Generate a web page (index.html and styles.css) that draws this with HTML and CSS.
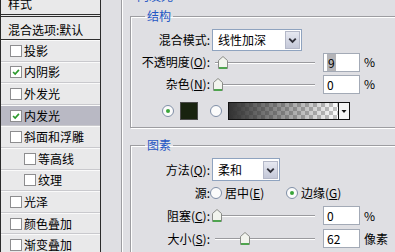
FILE: index.html
```html
<!DOCTYPE html>
<html lang="zh-CN">
<head>
  <meta charset="UTF-8">
  <title>图层样式 - 内发光</title>
  <link rel="stylesheet" href="styles.css">
</head>
<body>
  <div class="dialog">

    <!-- 样式列表 -->
    <div class="styles-list">
      <div class="list-head">样式</div>
      <div class="list-blend">混合选项:默认</div>
      <div class="list-row"><span class="cb"></span>投影</div>
      <div class="list-row"><span class="cb"><svg viewBox="0 0 12 12"><path d="M2.5 6 L5 8.5 L9.5 3.5" /></svg></span>内阴影</div>
      <div class="list-row"><span class="cb"></span>外发光</div>
      <div class="list-row selected"><span class="cb"><svg viewBox="0 0 12 12"><path d="M2.5 6 L5 8.5 L9.5 3.5" /></svg></span>内发光</div>
      <div class="list-row"><span class="cb"></span>斜面和浮雕</div>
      <div class="list-row sub"><span class="cb"></span>等高线</div>
      <div class="list-row sub"><span class="cb"></span>纹理</div>
      <div class="list-row"><span class="cb"></span>光泽</div>
      <div class="list-row"><span class="cb"></span>颜色叠加</div>
      <div class="list-row"><span class="cb"></span>渐变叠加</div>
    </div>

    <!-- 设置面板 -->
    <div class="settings">
      <fieldset class="outer">
        <legend>内发光</legend>

        <fieldset class="group structure">
          <legend>结构</legend>
          <div class="frow">
            <label>混合模式:</label>
            <div class="select wide"><span>线性加深</span><i class="drop"><svg viewBox="0 0 14 16"><polyline points="3.5,6.5 7,10 10.5,6.5" /></svg></i></div>
          </div>
          <div class="frow">
            <label>不透明度(<u>O</u>):</label>
            <div class="slider"><svg class="thumb" style="left:6px" viewBox="0 0 10 13"><path d="M0.5 4.5 L5 0.5 L9.5 4.5 V12.5 H0.5 Z" /><line x1="1" y1="12" x2="9" y2="12" /></svg></div>
            <div class="num"><span class="sel">9</span></div><span class="unit">%</span>
          </div>
          <div class="frow">
            <label>杂色(<u>N</u>):</label>
            <div class="slider"><svg class="thumb" style="left:1px" viewBox="0 0 10 13"><path d="M0.5 4.5 L5 0.5 L9.5 4.5 V12.5 H0.5 Z" /><line x1="1" y1="12" x2="9" y2="12" /></svg></div>
            <div class="num">0</div><span class="unit">%</span>
          </div>
          <div class="frow colors">
            <span class="radio on"></span>
            <span class="swatch"></span>
            <span class="radio"></span>
            <span class="gradient"><span class="ramp"></span><span class="ramp-drop"><svg viewBox="0 0 10 16"><polygon points="2.5,7 7.5,7 5,10" /></svg></span></span>
          </div>
        </fieldset>

        <fieldset class="group elements">
          <legend>图素</legend>
          <div class="frow">
            <label>方法(<u>Q</u>):</label>
            <div class="select narrow"><span>柔和</span><i class="drop"><svg viewBox="0 0 14 16"><polyline points="3.5,6.5 7,10 10.5,6.5" /></svg></i></div>
          </div>
          <div class="frow">
            <label>源:</label>
            <span class="opt first"><span class="radio"></span>居中(<u>E</u>)</span>
            <span class="opt"><span class="radio on"></span>边缘(<u>G</u>)</span>
          </div>
          <div class="frow">
            <label>阻塞(<u>C</u>):</label>
            <div class="slider"><svg class="thumb" style="left:0px" viewBox="0 0 10 13"><path d="M0.5 4.5 L5 0.5 L9.5 4.5 V12.5 H0.5 Z" /><line x1="1" y1="12" x2="9" y2="12" /></svg></div>
            <div class="num">0</div><span class="unit">%</span>
          </div>
          <div class="frow">
            <label>大小(<u>S</u>):</label>
            <div class="slider"><svg class="thumb" style="left:28px" viewBox="0 0 10 13"><path d="M0.5 4.5 L5 0.5 L9.5 4.5 V12.5 H0.5 Z" /><line x1="1" y1="12" x2="9" y2="12" /></svg></div>
            <div class="num">62</div><span class="unit">像素</span>
          </div>
        </fieldset>
      </fieldset>
    </div>

  </div>
</body>
</html>
```

FILE: styles.css
```css
body {
  margin: 0;
  background: #dfdfe3;
  font-family: "Noto Sans CJK SC", "Liberation Sans", sans-serif;
  font-size: 12px;
  line-height: 14px;
  color: #000;
  overflow: hidden;
}

.dialog {
  display: flex;
  height: 252px;
  overflow: hidden;
}

/* ---- 样式列表 ---- */

.styles-list {
  flex: none;
  width: 99px;
  background: #e9e9ea;
  border-left: 1px solid #2a2a2a;
  border-right: 1px solid #2a2a2a;
}

.list-head {
  margin-top: -6px;
  height: 20px;
  line-height: 20px;
  padding-left: 7px;
  border-bottom: 3px double #2d2d2d;
}

.list-blend {
  height: 19px;
  line-height: 19px;
  padding: 3px 0 0 7px;
  border-bottom: 1px solid #2d2d2d;
}

.list-row {
  box-sizing: border-box;
  height: 21.6px;
  display: flex;
  align-items: center;
  padding-left: 9px;
  border-top: 1px solid #fafafa;
  border-bottom: 1px solid #c9c9cd;
}

.list-row.sub {
  padding-left: 23px;
}

.list-row.selected {
  background: #b9b9c4;
}

.cb {
  box-sizing: border-box;
  width: 12px;
  height: 12px;
  margin-right: 2px;
  border: 1px solid #8d8d8f;
  background: #fff;
  display: flex;
}

.cb svg {
  width: 10px;
  height: 10px;
}

.cb path {
  fill: none;
  stroke: #2c9a2c;
  stroke-width: 2;
}

/* ---- 设置面板 ---- */

.settings {
  flex: 1;
  padding-left: 20px;
  min-width: 0;
}

fieldset {
  margin: 0;
  min-width: 0;
  border: 1px solid #9d9da1;
  box-shadow: inset 1px 1px 0 #fff, 1px 1px 0 #fff;
}

legend {
  padding: 0 2px;
  line-height: 14px;
  color: #2356c4;
}

.outer {
  margin-top: -11px;
  width: 300px;
  padding: 0 0 0 8px;
  border-right: none;
}

.outer > legend {
  margin-left: 5px;
}

.group {
  padding: 0;
  border-right: none;
}

.group > legend {
  margin-left: 14px;
}

.structure {
  margin-top: 6px;
  padding-top: 6px;
  padding-bottom: 5px;
}

.elements {
  margin-top: 10px;
  padding-top: 6px;
  height: 120px;
}

.frow {
  display: flex;
  align-items: center;
  height: 22px;
}

.elements .frow {
  height: 23px;
}

.frow label {
  flex: none;
  width: 79px;
  margin-right: 2px;
  text-align: right;
}

/* 下拉框 */

.select {
  box-sizing: border-box;
  height: 22px;
  display: flex;
  align-items: center;
  justify-content: space-between;
  border: 1px solid #8fa3bf;
  background: #fff;
}

.select span {
  padding-left: 5px;
}

.select.wide {
  width: 90px;
}

.select.narrow {
  width: 68px;
  height: 23px;
}

.drop {
  width: 15px;
  height: 18px;
  margin-right: 1px;
  background: linear-gradient(#e6e8f0, #c4c8d8);
  border: 1px solid #b4b8c8;
  box-sizing: border-box;
  display: flex;
}

.drop svg {
  width: 13px;
  height: 16px;
}

.drop polyline {
  fill: none;
  stroke: #2e2e38;
  stroke-width: 2;
}

/* 滑块 */

.slider {
  position: relative;
  width: 103px;
  height: 13px;
  margin-right: 8px;
}

.slider::before {
  content: "";
  position: absolute;
  left: 3px;
  right: 0;
  top: 6px;
  height: 0;
  border-top: 1px solid #9a9a9e;
  border-bottom: 1px solid #fff;
}

.thumb {
  position: absolute;
  top: 0;
  width: 10px;
  height: 13px;
}

.thumb path {
  fill: #f2f4ee;
  stroke: #8a8c88;
}

.thumb line {
  stroke: #4fa44f;
  stroke-width: 2;
}

/* 数值框 */

.num {
  box-sizing: border-box;
  width: 37px;
  height: 19px;
  line-height: 17px;
  padding-left: 3px;
  border: 1px solid #a3aab6;
  background: #fff;
}

.num .sel {
  background: #b4b4b8;
  padding: 0 1px;
}

.unit {
  margin-left: 4px;
}

/* 颜色行 */

.colors {
  margin-top: 5px;
}

.radio {
  box-sizing: border-box;
  flex: none;
  width: 12px;
  height: 12px;
  border: 1px solid #7f8ea6;
  border-radius: 50%;
  background: #fbfbfb;
  display: inline-flex;
  align-items: center;
  justify-content: center;
}

.radio.on::after {
  content: "";
  width: 4px;
  height: 4px;
  border-radius: 50%;
  background: #3aa53a;
}

.colors .radio:first-child {
  margin-left: 31px;
}

.swatch {
  box-sizing: border-box;
  width: 18px;
  height: 18px;
  margin: 0 12px 0 6px;
  border: 1px solid #4a4a4a;
  background: #18230f;
}

.gradient {
  box-sizing: border-box;
  display: flex;
  width: 122px;
  height: 18px;
  margin-left: 6px;
  border: 1px solid #111;
}

.ramp {
  flex: 1;
  background:
    linear-gradient(to right, rgba(50, 50, 50, 1), rgba(50, 50, 50, 0)),
    conic-gradient(#c4c4c4 25%, #fff 0 50%, #c4c4c4 0 75%, #fff 0) 0 0 / 8px 8px;
}

.ramp-drop {
  width: 10px;
  border-left: 1px solid #111;
  background: #f4f4f4;
  display: flex;
}

.ramp-drop svg {
  width: 10px;
  height: 16px;
}

.ramp-drop polygon {
  fill: #111;
}

/* 源 选项 */

.opt {
  display: inline-flex;
  align-items: center;
}

.opt .radio {
  margin-right: 3px;
}

.opt.first {
  width: 76px;
  margin-left: -2px;
}
```
